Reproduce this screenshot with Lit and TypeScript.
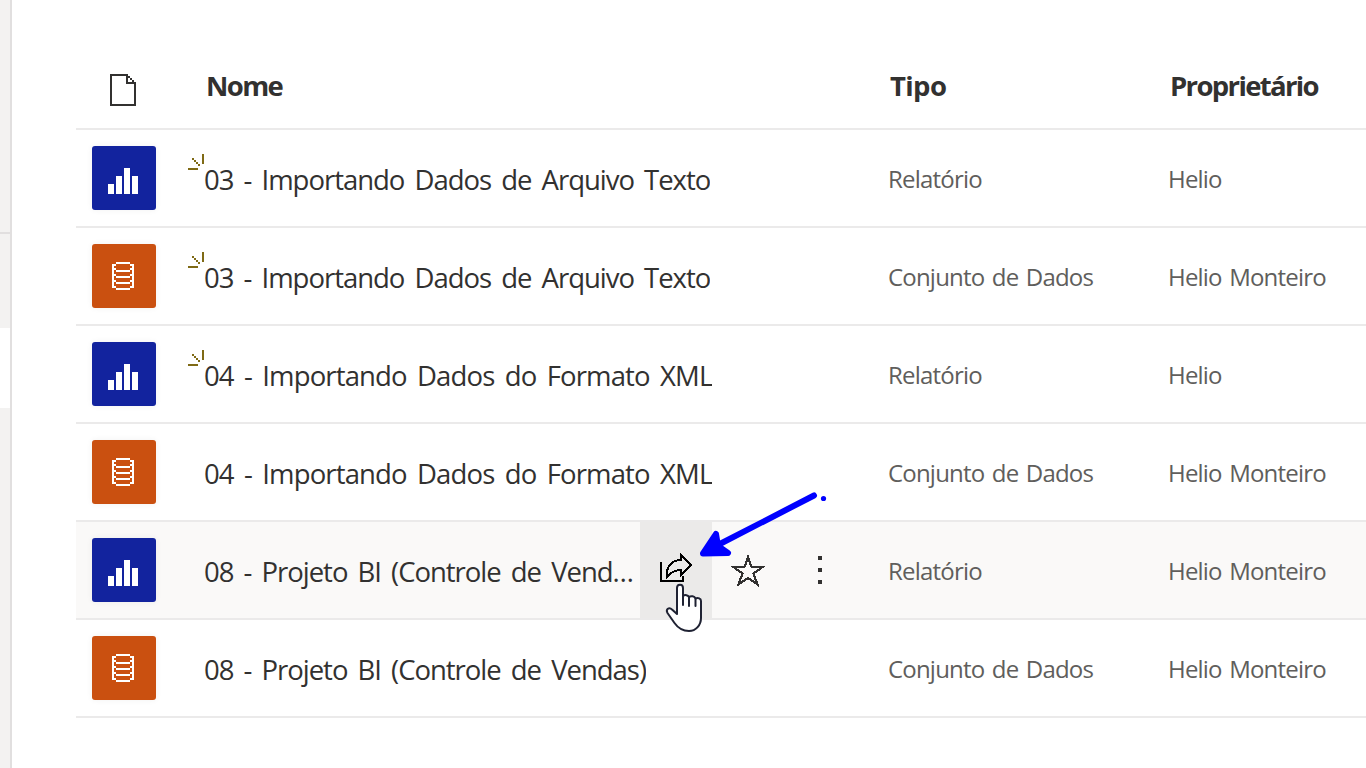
import { LitElement, html, css, svg, nothing } from "lit";
import { customElement } from "lit/decorators.js";
import { classMap } from "lit/directives/class-map.js";

interface Item {
  name: string;
  kind: "report" | "dataset";
  owner: string;
  fresh?: boolean;
  hover?: boolean;
  loose?: boolean;
}

const ITEMS: Item[] = [
  { name: "03 - Importando Dados de Arquivo Texto", kind: "report", owner: "Helio", fresh: true },
  { name: "03 - Importando Dados de Arquivo Texto", kind: "dataset", owner: "Helio Monteiro", fresh: true },
  { name: "04 - Importando Dados do Formato XML", kind: "report", owner: "Helio", fresh: true, loose: true },
  { name: "04 - Importando Dados do Formato XML", kind: "dataset", owner: "Helio Monteiro", loose: true },
  { name: "08 - Projeto BI (Controle de Vendas)", kind: "report", owner: "Helio Monteiro", hover: true },
  { name: "08 - Projeto BI (Controle de Vendas)", kind: "dataset", owner: "Helio Monteiro" },
];

const barsIcon = svg`<path fill="#fff" d="M16 38h6v10h-6zM24 30h6v18h-6zM32 22h6v26h-6zM40 30h6v18h-6z"/>`;

const stackIcon = svg`<path fill="#fff" d="M24 18h14v2h-14zM24 26h14v2h-14zM24 32h14v2h-14zM24 38h14v2h-14zM24 44h14v2h-14z
  M20 20h4v2h-2v20h2v2h-4zM38 20h4v24h-4v-2h2v-20h-2zM22 24h2v2h-2zM22 30h2v2h-2zM22 36h2v2h-2zM38 24h2v2h-2zM38 30h2v2h-2zM38 36h2v2h-2z"/>`;

@customElement("app-root")
export class AppRoot extends LitElement {
  static styles = css`
    :host {
      display: flex;
      position: relative;
      width: 1366px;
      height: 768px;
      overflow: hidden;
      background: #fff;
      color: #323130;
      font-family: "Open Sans", "Noto Sans", sans-serif;
    }
    .rail {
      box-sizing: border-box;
      flex: none;
      width: 12px;
      display: flex;
      flex-direction: column;
      background: #f3f2f1;
      border-right: 2px solid #e1dfdf;
    }
    .rail-top { height: 232px; border-bottom: 2px solid #e1dfdf; }
    .rail-current { margin-top: 94px; height: 80px; background: #fff; }
    .table {
      flex: 1;
      min-width: 0;
      padding-left: 64px;
    }
    .row, .head {
      display: grid;
      grid-template-columns: 128px 684px 280px 1fr;
      box-sizing: border-box;
      border-bottom: 2px solid #ebeaea;
      white-space: nowrap;
    }
    .head {
      height: 130px;
      padding-top: 67px;
      font-size: 27.5px;
      line-height: 38px;
      font-weight: 700;
      letter-spacing: -1.65px;
    }
    .head-icon { display: block; margin: 7px 0 0 34px; }
    .head-name { padding-left: 2px; letter-spacing: -1.6px; }
    .head-type { padding-left: 2px; letter-spacing: -0.6px; }
    .head-owner { padding-left: 2px; }
    .row { height: 98px; }
    .row.hover { background: #faf9f8; }
    .tile {
      display: block;
      margin: 16px 0 0 16px;
      border-radius: 3px;
      box-shadow: 0 0 6px rgba(0, 0, 0, 0.06);
      background: #12239e;
    }
    .tile.dataset { background: #ca5010; }
    .name-cell { position: relative; display: flex; }
    .spark { position: absolute; left: -16px; top: 24px; }
    .name {
      flex: 0 1 auto;
      min-width: 0;
      overflow: hidden;
      text-overflow: ellipsis;
      font-size: 27.5px;
      line-height: 40px;
      padding-top: 30px;
      letter-spacing: -1.02px;
      word-spacing: 4px;
    }
    .loose .name { letter-spacing: -0.86px; }
    .hover .name { flex: 0 0 436px; }
    .actions { display: flex; }
    .action { width: 72px; height: 96px; }
    .action.active { background: #ebeae9; }
    .meta {
      font-size: 24px;
      line-height: 36px;
      padding-top: 31px;
      color: #605e5c;
      letter-spacing: -0.8px;
      word-spacing: 2px;
    }
    .markup { position: absolute; left: 690px; top: 484px; }
    .pointer { position: absolute; left: 660px; top: 580px; }
  `;

  private actions() {
    return html`<div class="actions">
      <svg class="action active" viewBox="0 0 72 96" fill="none" stroke="#000" stroke-width="2" shape-rendering="crispEdges">
        <path d="M21 40V59H43V54" />
        <path d="M41 33L51 43L41 53V48C35 48 31 50 27 55C26 45 31 38 41 38Z" />
      </svg>
      <svg class="action" viewBox="0 0 72 96" fill="none" stroke="#323130" stroke-width="2.200" shape-rendering="crispEdges">
        <path d="M36 35L39.500 45H50.500L41.500 51.500L45.500 62.500L36 56L26.500 62.500L30.500 51.500L21.500 45H32.500Z" />
      </svg>
      <svg class="action" viewBox="0 0 72 96" fill="#323130" shape-rendering="crispEdges">
        <path d="M34 34h4v4h-4zM34 46h4v4h-4zM34 58h4v4h-4z" />
      </svg>
    </div>`;
  }

  private row(item: Item) {
    return html`<div class=${classMap({ row: true, hover: !!item.hover, loose: !!item.loose })}>
      <div>
        <svg class="tile ${item.kind}" width="64" height="64" shape-rendering="crispEdges">
          ${item.kind === "report" ? barsIcon : stackIcon}
        </svg>
      </div>
      <div class="name-cell">
        ${item.fresh
          ? html`<svg class="spark" width="16" height="16" fill="#7f6a15" shape-rendering="crispEdges">
              <path d="M14 0h2v10h-2zM0 14h10v2H0zM4 4h2v2h-2zM6 6h2v2h-2zM8 8h2v2h-2zM10 10h2v2h-2z" />
            </svg>`
          : nothing}
        <div class="name">${item.name}</div>
        ${item.hover ? this.actions() : nothing}
      </div>
      <div class="meta">${item.kind === "report" ? "Relatório" : "Conjunto de Dados"}</div>
      <div class="meta">${item.owner}</div>
    </div>`;
  }

  render() {
    return html`
      <div class="rail">
        <div class="rail-top"></div>
        <div class="rail-current"></div>
      </div>
      <div class="table">
        <div class="head">
          <svg class="head-icon" width="26" height="32" fill="none" stroke="#323130" stroke-width="2" shape-rendering="crispEdges">
            <path d="M1 1H17V9H25V31H1Z" />
            <path fill="#323130" stroke="none" d="M18 2h2v2h-2zM20 4h2v2h-2zM22 6h2v2h-2z" />
          </svg>
          <div class="head-name">Nome</div>
          <div class="head-type">Tipo</div>
          <div class="head-owner">Proprietário</div>
        </div>
        ${ITEMS.map((item) => this.row(item))}
      </div>
      <svg class="markup" width="140" height="80" fill="none" stroke="#00f" stroke-width="6" stroke-linecap="round" stroke-linejoin="round">
        <path d="M124 11.500L24 63" />
        <path fill="#00f" d="M13 69.500L26 50L28 62L38 69Z" />
        <circle cx="133.500" cy="14.500" r="2.600" fill="#00f" stroke="none" />
      </svg>
      <svg class="pointer" width="50" height="54" fill="#fff" stroke="#1f2233" stroke-width="2" stroke-linecap="round" stroke-linejoin="round">
        <path d="M17 34V8C17 3.500 23 3.500 23 8V16C25 14.500 28 15 29 17C31 15.500 34.500 16 35.500 18.500C38 17.500 41 18.500 41 21V38C41 45 36 51 29 51C22 51 18 48 14.500 43L7.500 33C5.500 29.500 9 26.500 12 29.500Z" />
        <path d="M23 16V25M29 17V26M35.500 18.500V26" />
      </svg>
    `;
  }
}
